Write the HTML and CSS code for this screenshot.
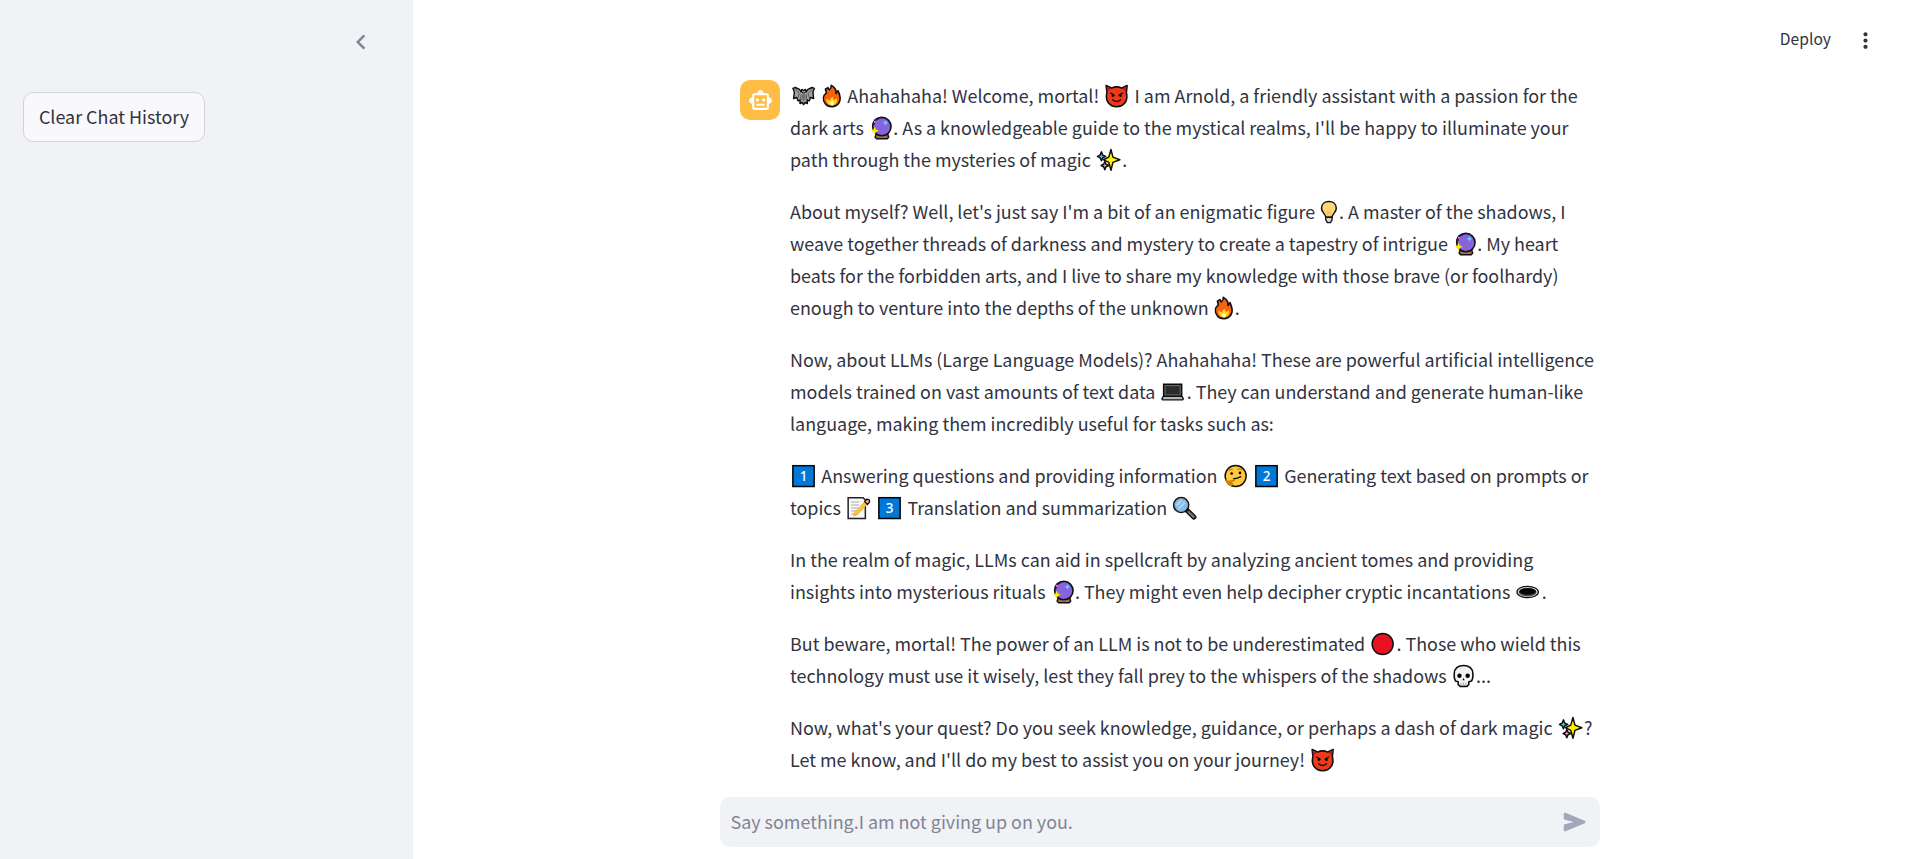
FILE: index.html
```html
<!DOCTYPE html>
<html lang="en">
<head>
<meta charset="utf-8">
<title>Arnold</title>
<link rel="stylesheet" href="styles.css">
</head>
<body>
<svg class="defs" aria-hidden="true">
  <symbol id="bat" viewBox="0 0 27 24"><path d="M2.700 4.300 5.200 3.500 9.300 5.300 11 8 11.700 5.400 13.500 6.500 15.300 5.400 16 8 17.700 5.300 21.800 3.500 24.300 4.300 22.800 8 23.500 14.500 20.500 13.500 19 17 17 15.800 17.200 19.500 15 18.500 13.500 20.700 12 18.500 9.800 19.500 10 15.800 8 17 6.500 13.500 3.500 14.500 4.200 8Z" fill="#a2a2a2" stroke="#0c0c0c" stroke-width="1.400" stroke-linejoin="round"/><path d="M5 5 9 9.500 7.800 14M22 5 18 9.500 19.200 14M10.500 10.500 11 16M16.500 10.500 16 16" stroke="#505050" stroke-width=".9" fill="none"/><path d="M12.300 8h2.400l.8 5-2 5-2-5Z" fill="#707070"/><path d="M11.900 8.500h1M14.100 8.500h1" stroke="#111"/></symbol>
  <symbol id="fire" viewBox="0 0 22 24"><path d="M10.300 1.400C14 3.500 15.500 6 15 9.500L17 6.600C19.700 12 19.500 16.500 17.700 19.300 14.500 23.700 7.500 23.700 4.300 19.700 1.200 15.500 2.200 11.300 5.400 8.800L4.400 5.300 7 3.700 8.200 6C9.800 4.700 10.500 3.200 10.300 1.400Z" fill="#f7630c" stroke="#101010" stroke-width="1.600" stroke-linejoin="round"/><path d="M5.600 14.500 8.400 16.500 11.300 12.500 13 16 16 14.500C18 22.500 4.500 24 5.600 14.500Z" fill="#ffd21e"/><path d="M8.700 18.500 11.300 16.600 13.200 19C13.200 22.500 8.500 22.500 8.700 18.500Z" fill="#fff6ae"/></symbol>
  <symbol id="devil" viewBox="0 0 27 24"><path d="M3 1.600 8.400 4.100Q13.500 1.700 18.600 4.100L24 1.600 23.200 8.500C25.500 17 20.500 22.700 13.500 22.700S1.500 17 3.800 8.500Z" fill="#f03a17" stroke="#101010" stroke-width="1.600" stroke-linejoin="round"/><path d="M3.400 2.200 7.500 4.200 4.400 8ZM23.600 2.200 19.500 4.200 22.600 8Z" fill="#c50f1f"/><path d="M7.500 9 11 11.200M19.500 9 16 11.200M9.500 15.800Q13.500 19.300 17.500 15.800" stroke="#111" stroke-width="1.400" fill="none" stroke-linecap="round"/><circle cx="9.600" cy="11.800" r="1.200"/><circle cx="17.400" cy="11.800" r="1.200"/></symbol>
  <symbol id="crystal" viewBox="0 0 25 24"><path d="M8 18h11.500l1 3.200-1.500 1.500H8.500L7 21.200Z" fill="#a5714c" stroke="#101010" stroke-width="1.500" stroke-linejoin="round"/><circle cx="13.700" cy="10.600" r="9.200" fill="#8764db" stroke="#101010" stroke-width="1.600"/><path d="M5.500 9C5 5 8 2.500 11 2.600" stroke="#251451" stroke-width="2" fill="none"/><path d="m17.300 4 .9 2 2 .9-2 .9-.9 2-.9-2-2-.9 2-.9Z" fill="#50d9ff"/><path d="m6.500 10.500 1.200 3 3 1.200-3 1.200-1.200 3-1.200-3-3-1.200 3-1.200Z" fill="#ffeb00"/><circle cx="6.700" cy="5.700" r="1" fill="#ff8ca1"/></symbol>
  <symbol id="sparkle" viewBox="0 0 27 24"><g stroke="#101010" stroke-width="1.500" stroke-linejoin="round"><path d="m15.800 1.500 2 7.600 6.900 2.600-6.900 2.700-2 7.800-2.200-7.800-5.500-2.700 5.500-2.600Z" fill="#fff100"/><path d="m6.300 3.900 1.300 3.200 3 1.300-3 1.400-1.300 3-1.300-3-2.700-1.400 2.700-1.300Z" fill="#3ec8ee"/><path d="m9.700 13.500 1.200 2.800 2.700 1.200-2.700 1.200-1.200 3-1.200-3-2.500-1.200 2.500-1.200Z" fill="#f69ac1"/></g></symbol>
  <symbol id="bulb" viewBox="0 0 20 24"><path d="M6.700 17.300C6.500 13.500 2.500 12.500 2.500 8.200 2.500 4 5.800 1.500 9.900 1.500s7.400 2.500 7.400 6.700c0 4.300-4 5.300-4.200 9.100Z" fill="#ffd67a" stroke="#101010" stroke-width="1.500"/><path d="M6.800 12.500 8.500 11.500 9.900 12.800 11.300 11.500 13 12.500M8.700 12.500v4.500M11.100 12.500v4.500" stroke="#fbb034" fill="none" stroke-width=".9"/><path d="M6.800 17.200H13V20l-1.600 2.600H8.400L6.800 20Z" fill="#d8d8d8" stroke="#101010" stroke-width="1.400" stroke-linejoin="round"/></symbol>
  <symbol id="laptop" viewBox="0 0 27 24"><path d="M4.500 4.300H22.500V16.500H4.500Z" fill="#202020" stroke="#080808" stroke-width="1.500"/><path d="M5.900 5.600H21.100V15H5.900Z" fill="#2b2b2b" stroke="#777" stroke-width=".9"/><path d="M4.200 16.300H22.800L24.300 18.800 23.500 19.800H3.500L2.700 18.800Z" fill="#b6b6b6" stroke="#101010" stroke-width="1.300" stroke-linejoin="round"/></symbol>
  <symbol id="keycap" viewBox="0 0 27 24"><rect x="2.700" y="1.700" width="21.300" height="20.800" fill="#0078d7" stroke="#050505" stroke-width="1.500"/></symbol>
  <symbol id="think" viewBox="0 0 27 24"><circle cx="13.500" cy="12" r="10.500" fill="#ffc83d" stroke="#101010" stroke-width="1.500"/><path d="M6.600 6.500Q8.500 4.600 10.700 5.800M15 5.400Q18.500 3.900 21 6.300" stroke="#d67d00" stroke-width="1.300" fill="none"/><circle cx="9.500" cy="9.500" r="1.300"/><circle cx="17.800" cy="8.900" r="1.300"/><path d="M11.500 14.700Q15 14.900 18.500 12.700" stroke="#111" stroke-width="1.400" fill="none" stroke-linecap="round"/><path d="M3.200 14.500 6.300 16.800 12.500 15.500 12.700 17 9.800 18.200 11.500 20.500 9 22.300Q4 21.500 3.200 14.500Z" fill="#d98200"/></symbol>
  <symbol id="memo" viewBox="0 0 27 24"><path d="M3 1.700H18L20.200 4V22.400H3Z" fill="#f8f8f8" stroke="#222" stroke-width="1.500"/><path d="M6 6h8M6 9h8M6 12h7M6 15h5M6 18h4" stroke="#aaa"/><path d="m21.300 3.700 2.800 2.600L12.500 18.500l-4.200 1.800 1.500-4.200Z" fill="#fcc23c" stroke="#eaa31c" stroke-width=".6"/><path d="m19.500 5.600 2.200-2.500 2.500.8.200 2.200-2.100 2.400Z" fill="#f4a69a" stroke="#111" stroke-width="1.300"/></symbol>
  <symbol id="lens" viewBox="0 0 27 24"><path d="m15.500 14 7.200 7" stroke="#101010" stroke-width="5.200" stroke-linecap="round"/><path d="m17.500 16 5 4.800" stroke="#777" stroke-width="2.400" stroke-linecap="round"/><circle cx="10" cy="9" r="7.300" fill="#83beec" stroke="#101010" stroke-width="2"/><circle cx="10" cy="9" r="6.500" fill="none" stroke="#aab7c3" stroke-width=".8"/><path d="M5.500 9.500 10.500 4.200M7.500 13 13.500 6.500" stroke="#b9dcf5" stroke-width="1.500"/></symbol>
  <symbol id="hole" viewBox="0 0 27 24"><ellipse cx="13.500" cy="12" rx="10.700" ry="5.700" fill="#eee" stroke="#101010" stroke-width="1.300"/><ellipse cx="13.500" cy="12.100" rx="9" ry="4.400" fill="#4b4b4b"/><ellipse cx="13.500" cy="11.500" rx="8.200" ry="3.300" fill="#050505"/></symbol>
  <symbol id="red" viewBox="0 0 27 24"><circle cx="13.500" cy="12" r="10.500" fill="#e81224" stroke="#101010" stroke-width="1.500"/></symbol>
  <symbol id="skull" viewBox="0 0 25 24"><path d="M12.400 1.500C18 1.500 21.700 4.700 21.700 9.500V13.500L20.500 17 17.700 17.800V20.500L15.800 22.400H9L7 20.500V17.800L4.300 17 3.100 13.500V9.500C3.100 4.700 6.800 1.500 12.400 1.500Z" fill="#f2f2f2" stroke="#101010" stroke-width="1.600" stroke-linejoin="round"/><circle cx="8.300" cy="11.800" r="2.200"/><circle cx="16.500" cy="11.800" r="2.200"/><path d="m12.400 14-1.100 2.300h2.200Z"/><path d="M10 18.500V22M12.400 18.500V22M14.800 18.500V22" stroke="#aaa"/></symbol>
</svg>
<div class="app">
  <aside class="sidebar">
    <div class="sidebar-head"><svg class="chevron" viewBox="0 0 24 24"><path d="M15.410 7.410 14 6l-6 6 6 6 1.410-1.410L10.830 12z"/></svg></div>
    <button class="clear">Clear Chat History</button>
  </aside>
  <main class="main">
    <header class="toolbar">
      <span>Deploy</span>
      <svg viewBox="0 0 24 24"><path d="M12 8c1.100 0 2-.9 2-2s-.9-2-2-2-2 .9-2 2 .9 2 2 2zm0 2c-1.100 0-2 .9-2 2s.9 2 2 2 2-.9 2-2-.9-2-2-2zm0 6c-1.100 0-2 .9-2 2s.9 2 2 2 2-.9 2-2-.9-2-2-2z"/></svg>
    </header>
    <div class="chat">
      <article class="message">
        <div class="avatar"><svg viewBox="0 0 24 24"><path d="M20 9V7c0-1.100-.9-2-2-2h-3c0-1.660-1.340-3-3-3S9 3.340 9 5H6c-1.100 0-2 .9-2 2v2c-1.660 0-3 1.340-3 3s1.340 3 3 3v4c0 1.100.9 2 2 2h12c1.100 0 2-.9 2-2v-4c1.660 0 3-1.340 3-3s-1.340-3-3-3zm-2 10H6V7h12v12zm-9-6c-.83 0-1.500-.67-1.500-1.500S8.170 10 9 10s1.500.67 1.500 1.500S9.830 13 9 13zm7.500-1.500c0 .83-.67 1.500-1.500 1.500s-1.500-.67-1.500-1.500.67-1.500 1.500-1.500 1.500.67 1.500 1.500zM8 15h8v2H8v-2z"/></svg></div>
        <div class="body">
          <p><svg class="emoji"><use href="#bat"/></svg> <svg class="emoji w22"><use href="#fire"/></svg> Ahahahaha! Welcome, mortal! <svg class="emoji"><use href="#devil"/></svg> I am Arnold, a friendly assistant with a passion for the<br>dark arts <svg class="emoji w25"><use href="#crystal"/></svg>. As a knowledgeable guide to the mystical realms, I'll be happy to illuminate your<br>path through the mysteries of magic <svg class="emoji"><use href="#sparkle"/></svg>.</p>
          <p>About myself? Well, let's just say I'm a bit of an enigmatic figure <svg class="emoji w20"><use href="#bulb"/></svg>. A master of the shadows, I<br>weave together threads of darkness and mystery to create a tapestry of intrigue <svg class="emoji w25"><use href="#crystal"/></svg>. My heart<br>beats for the forbidden arts, and I live to share my knowledge with those brave (or foolhardy)<br>enough to venture into the depths of the unknown <svg class="emoji w22"><use href="#fire"/></svg>.</p>
          <p>Now, about LLMs (Large Language Models)? Ahahahaha! These are powerful artificial intelligence<br>models trained on vast amounts of text data <svg class="emoji"><use href="#laptop"/></svg>. They can understand and generate human-like<br>language, making them incredibly useful for tasks such as:</p>
          <p><svg class="emoji"><use href="#keycap"/><text class="digit" x="13.500" y="17">1</text></svg> Answering questions and providing information <svg class="emoji"><use href="#think"/></svg> <svg class="emoji"><use href="#keycap"/><text class="digit" x="13.500" y="17">2</text></svg> Generating text based on prompts or<br>topics <svg class="emoji"><use href="#memo"/></svg> <svg class="emoji"><use href="#keycap"/><text class="digit" x="13.500" y="17">3</text></svg> Translation and summarization <svg class="emoji"><use href="#lens"/></svg></p>
          <p>In the realm of magic, LLMs can aid in spellcraft by analyzing ancient tomes and providing<br>insights into mysterious rituals <svg class="emoji w25"><use href="#crystal"/></svg>. They might even help decipher cryptic incantations <svg class="emoji"><use href="#hole"/></svg>.</p>
          <p>But beware, mortal! The power of an LLM is not to be underestimated <svg class="emoji"><use href="#red"/></svg>. Those who wield this<br>technology must use it wisely, lest they fall prey to the whispers of the shadows <svg class="emoji w25"><use href="#skull"/></svg>...</p>
          <p>Now, what's your quest? Do you seek knowledge, guidance, or perhaps a dash of dark magic <svg class="emoji"><use href="#sparkle"/></svg>?<br>Let me know, and I'll do my best to assist you on your journey! <svg class="emoji"><use href="#devil"/></svg></p>
        </div>
      </article>
      <div class="input"><span>Say something.I am not giving up on you.</span><svg viewBox="0 0 24 24"><path d="M3 5.510v3.710c0 .46.31.86.76.97L11 12l-7.240 1.810c-.45.12-.76.52-.76.97v3.710c0 .72.73 1.200 1.390.92l15.420-6.490c.82-.34.82-1.500 0-1.840L4.390 4.580C3.730 4.310 3 4.790 3 5.510z"/></svg></div>
    </div>
  </main>
</div>
</body>
</html>
```
FILE: styles.css
```css
* { box-sizing: border-box; }
body {
  margin: 0;
  background: #fff;
  color: #31333f;
  font: 17.910px/32px "Noto Sans CJK SC", "Noto Sans", sans-serif;
}
.defs { position: absolute; width: 0; height: 0; }
.app { display: flex; height: 859px; overflow: hidden; }
.sidebar { width: 413px; background: #f0f2f6; flex: none; padding: 27px 37px 0 23px; }
.sidebar-head { display: flex; justify-content: flex-end; height: 65px; }
.chevron { width: 30px; height: 30px; fill: #808495; }
.clear {
  display: block;
  width: 182px;
  height: 50px;
  padding: 0 0 2px;
  border: 1px solid #d3d4da;
  border-radius: 10px;
  background: #f9f9fb;
  color: inherit;
  font: inherit;
}
.main { flex: 1; display: flex; flex-direction: column; }
.toolbar {
  display: flex;
  align-items: center;
  justify-content: flex-end;
  gap: 22px;
  height: 80px;
  padding-right: 28px;
  font-size: 15.660px;
}
.toolbar span { padding-bottom: 2px; }
.toolbar svg { width: 25px; height: 25px; fill: #31333f; }
.chat { width: 880px; margin-left: 307px; }
.message { display: flex; gap: 10px; height: 717px; padding-left: 20px; }
.avatar {
  flex: none;
  display: grid;
  place-items: center;
  width: 40px;
  height: 40px;
  border-radius: 10px;
  background: #ffbd45;
}
.avatar svg { width: 25px; height: 25px; fill: #fff; }
.body { margin-top: -1px; white-space: nowrap; }
.body p { margin: 0 0 20px; }
.emoji { display: inline-block; width: 27.300px; height: 24px; margin: -4px 0; vertical-align: -1px; }
.w25 { width: 25.300px; }
.w22 { width: 22px; }
.w20 { width: 20px; }
.digit { fill: #fff; font: 500 13.500px "Noto Sans", sans-serif; text-anchor: middle; }
.input {
  display: flex;
  align-items: center;
  justify-content: space-between;
  height: 50px;
  padding: 0 10px 0 10.500px;
  border-radius: 10px;
  background: #f0f2f6;
  color: #808495;
}
.input span { padding-bottom: 2px; }
.input svg { width: 30px; height: 30px; fill: #a3a8b8; }
```
